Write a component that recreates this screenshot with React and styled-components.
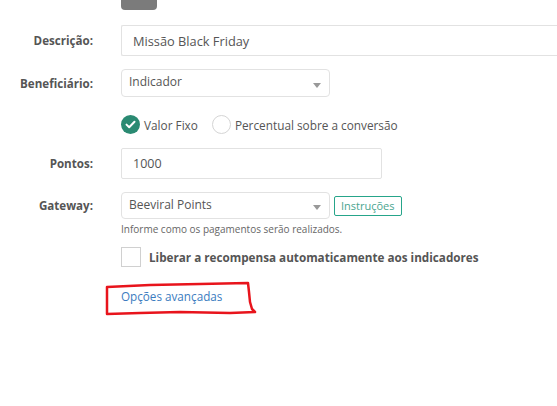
import React from 'react';
import styled, { createGlobalStyle } from 'styled-components';

const GlobalStyle = createGlobalStyle`
  html, body {
    margin: 0;
    background: #fff;
  }
  body {
    font-family: "Open Sans", "Liberation Sans", sans-serif;
    color: #555;
  }
`;

const Page = styled.div`
  position: relative;
  width: 557px;
  height: 406px;
  overflow: hidden;
`;

const Form = styled.div`
  display: grid;
  grid-template-columns: 93px 1fr;
  column-gap: 28px;
  margin-top: -15px;
`;

const Label = styled.div`
  font-size: 11.6px;
  font-weight: 700;
  color: #555;
  text-align: right;
  align-self: center;
  margin-top: ${(p) => p.mt || 0}px;
`;

const Field = styled.div`
  display: flex;
  align-items: center;
  gap: 4px;
  margin-top: ${(p) => p.mt || 0}px;
`;

const TopButton = styled.div`
  width: 36px;
  height: 25px;
  background: #7b7b7b;
  border-radius: 0 0 4px 4px;
`;

const TextInput = styled.div`
  box-sizing: border-box;
  width: ${(p) => p.w};
  height: ${(p) => p.h}px;
  border: 1px solid #e2e2e2;
  border-right: ${(p) => (p.open ? 'none' : '1px solid #e2e2e2')};
  border-radius: 2px;
  padding-left: ${(p) => p.pl || 11}px;
  display: flex;
  align-items: center;
  font-size: ${(p) => p.fs || 13}px;
  color: #555;
`;

const Select = styled.div`
  box-sizing: border-box;
  width: ${(p) => p.w}px;
  height: ${(p) => p.h}px;
  border: 1px solid #e2e2e2;
  border-radius: 4px;
  padding: 0 8px 0 7px;
  display: flex;
  align-items: center;
  justify-content: space-between;
  font-size: 12px;
  color: #555;
  span {
    margin-top: -3px;
  }
`;

const Caret = styled.i`
  width: 0;
  height: 0;
  border-left: 4px solid transparent;
  border-right: 4px solid transparent;
  border-top: 5px solid #999;
  margin-top: 4px;
`;

const RadioRow = styled.div`
  display: flex;
  align-items: center;
  gap: 4px;
  font-size: 11.8px;
  color: #555;
`;

const Radio = styled.span`
  box-sizing: border-box;
  width: 19px;
  height: 19px;
  border-radius: 50%;
  display: inline-flex;
  align-items: center;
  justify-content: center;
  background: ${(p) => (p.checked ? '#2a8a72' : '#fff')};
  border: ${(p) => (p.checked ? 'none' : '1px solid #d5d5d5')};
  margin-left: ${(p) => p.ml || 0}px;
`;

const Instrucoes = styled.button`
  box-sizing: border-box;
  height: 20px;
  padding: 0 6px;
  background: #fff;
  border: 1px solid #26a58a;
  border-radius: 2px;
  font-family: inherit;
  font-size: 11px;
  color: #4aa58f;
`;

const Help = styled.div`
  font-size: 10px;
  color: #666;
  margin-top: 3px;
`;

const Checkbox = styled.span`
  box-sizing: border-box;
  width: 20px;
  height: 20px;
  border: 1px solid #d0d0d0;
  background: #fff;
`;

const CheckLabel = styled.span`
  font-size: 11.7px;
  font-weight: 700;
  color: #555;
  margin-left: 4px;
`;

const Link = styled.a`
  font-size: 11.7px;
  color: #3b7cc0;
  text-decoration: none;
`;

const Annotation = styled.svg`
  position: absolute;
  left: 0;
  top: 0;
  pointer-events: none;
`;

const Check = () => (
  <svg width="11" height="9" viewBox="0 0 11 9">
    <path d="M1.5 4.6 L4.2 7.2 L9.5 1.8" fill="none" stroke="#fff" strokeWidth="2" strokeLinecap="round" strokeLinejoin="round" />
  </svg>
);

const App = () => {
  return (
    <Page>
      <GlobalStyle />
      <Form>
        <Label>&nbsp;</Label>
        <Field>
          <TopButton />
        </Field>

        <Label mt={15}>Descrição:</Label>
        <Field mt={15}>
          <TextInput w="460px" h={31} fs={12.8} open>Missão Black Friday</TextInput>
        </Field>

        <Label mt={13}>Beneficiário:</Label>
        <Field mt={13}>
          <Select w={209} h={28}>
            <span>Indicador</span>
            <Caret />
          </Select>
        </Field>

        <div />
        <Field mt={18}>
          <RadioRow>
            <Radio checked><Check /></Radio>
            Valor Fixo
            <Radio ml={10} />
            Percentual sobre a conversão
          </RadioRow>
        </Field>

        <Label mt={14}>Pontos:</Label>
        <Field mt={14}>
          <TextInput w="261px" h={31} fs={12.5}>1000</TextInput>
        </Field>

        <Label mt={13}>Gateway:</Label>
        <Field mt={13}>
          <Select w={209} h={27}>
            <span>Beeviral Points</span>
            <Caret />
          </Select>
          <Instrucoes>Instruções</Instrucoes>
        </Field>

        <div />
        <Help>Informe como os pagamentos serão realizados.</Help>

        <div />
        <Field mt={11}>
          <Checkbox />
          <CheckLabel>Liberar a recompensa automaticamente aos indicadores</CheckLabel>
        </Field>

        <div />
        <Field mt={21}>
          <Link href="#">Opções avançadas</Link>
        </Field>
      </Form>
      <Annotation width="557" height="406">
        <path
          d="M107 287 L150 285 L200 284 L248 283 L249 292 L250 302 L252 309 L255 312 L230 313 L180 312 L140 313 L107 314 L107 300 Z"
          fill="none"
          stroke="#e8141c"
          strokeWidth="2.5"
          strokeLinejoin="round"
        />
      </Annotation>
    </Page>
  );
};

export default App;
